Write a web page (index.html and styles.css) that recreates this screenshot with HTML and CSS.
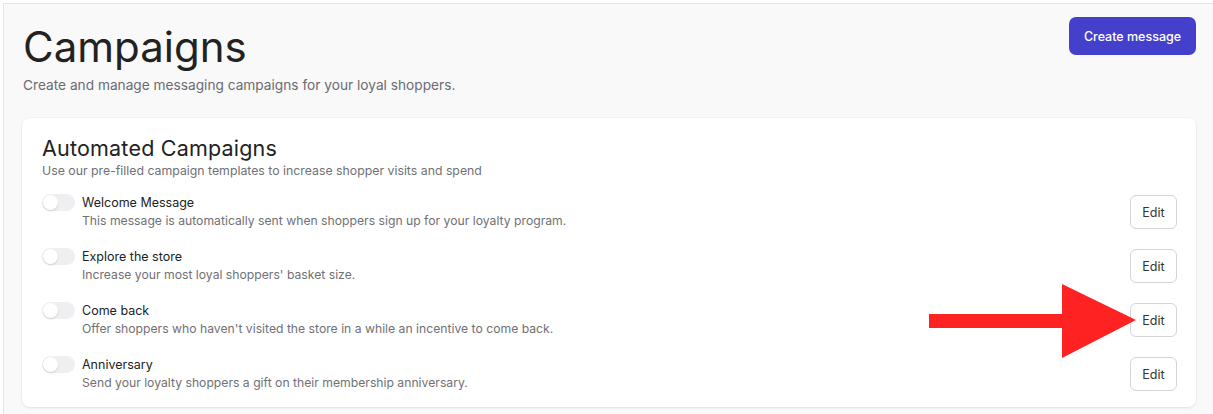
FILE: index.html
```html
<!DOCTYPE html>
<html>
<head>
<meta charset="utf-8">
<link rel="stylesheet" href="styles.css">
</head>
<body>
<div class="frame">
  <header class="page-head">
    <div class="head-text">
      <h1 class="page-title">Campaigns</h1>
      <p class="page-sub">Create and manage messaging campaigns for your loyal shoppers.</p>
    </div>
    <button class="btn-primary">Create message</button>
  </header>
  <section class="card">
    <h2 class="card-title">Automated Campaigns</h2>
    <p class="card-sub">Use our pre-filled campaign templates to increase shopper visits and spend</p>
    <ul class="rows">
      <li class="row">
        <span class="toggle"><span class="knob"></span></span>
        <div class="row-text">
          <div class="row-title">Welcome Message</div>
          <div class="row-desc">This message is automatically sent when shoppers sign up for your loyalty program.</div>
        </div>
        <button class="btn-edit">Edit</button>
      </li>
      <li class="row">
        <span class="toggle"><span class="knob"></span></span>
        <div class="row-text">
          <div class="row-title">Explore the store</div>
          <div class="row-desc">Increase your most loyal shoppers' basket size.</div>
        </div>
        <button class="btn-edit">Edit</button>
      </li>
      <li class="row">
        <span class="toggle"><span class="knob"></span></span>
        <div class="row-text">
          <div class="row-title">Come back</div>
          <div class="row-desc">Offer shoppers who haven't visited the store in a while an incentive to come back.</div>
        </div>
        <button class="btn-edit">Edit</button>
      </li>
      <li class="row">
        <span class="toggle"><span class="knob"></span></span>
        <div class="row-text">
          <div class="row-title">Anniversary</div>
          <div class="row-desc">Send your loyalty shoppers a gift on their membership anniversary.</div>
        </div>
        <button class="btn-edit">Edit</button>
      </li>
    </ul>
  </section>
</div>
<svg class="arrow" width="210" height="76" viewBox="0 0 210 76" aria-hidden="true">
  <polygon points="0,30 133,30 133,0 207,36 133,74 133,44 0,44" fill="#fe2222"/>
</svg>
</body>
</html>
```

FILE: styles.css
```css
* { box-sizing: border-box; }
html, body { margin: 0; padding: 0; background: #ffffff; }
body {
  font-family: Inter, "Noto Sans", "Liberation Sans", sans-serif;
  color: #222;
  height: 414px;
  overflow: hidden;
  position: relative;
}
.frame {
  margin: 3px 0 0 3px;
  border-top: 1px solid #e4e4e7;
  border-left: 1px solid #e4e4e7;
  background: #f9f9fa;
  padding: 13px 17px 0 18px;
  height: 420px;
}
.page-head {
  display: flex;
  justify-content: space-between;
  align-items: flex-start;
}
.head-text { padding-left: 1px; }
.page-title {
  margin: 0;
  font-size: 42px;
  font-weight: 400;
  line-height: 60px;
  letter-spacing: 0;
  color: #222;
}
.page-sub {
  margin: -2px 0 0;
  font-size: 13.7px;
  line-height: 20px;
  color: #6b6b70;
}
.btn-primary {
  font-family: inherit;
  margin-top: 0;
  width: 127px;
  height: 38px;
  border: 0;
  border-radius: 7px;
  background: #4540cb;
  color: #fff;
  font-size: 12.5px;
  font-weight: 500;
}
.card {
  margin-top: 23px;
  background: #fff;
  border-radius: 8px;
  box-shadow: 0 1px 3px rgba(0,0,0,0.08), 0 0 0 1px rgba(0,0,0,0.02);
  padding: 16px 19px 5px 20px;
}
.card-title {
  margin: 0;
  font-size: 21.5px;
  font-weight: 400;
  letter-spacing: 0.2px;
  line-height: 28px;
  color: #222;
}
.card-sub {
  margin: 0;
  font-size: 12.3px;
  line-height: 18px;
  color: #707075;
}
.rows { list-style: none; margin: 6px 0 0; padding: 0; }
.row {
  display: flex;
  align-items: center;
  height: 54px;
}
.toggle {
  align-self: flex-start;
  margin-top: 8px;
  width: 33px;
  height: 17px;
  border-radius: 9px;
  background: #efeff1;
  position: relative;
  flex: none;
}
.knob {
  position: absolute;
  left: 1px;
  top: 1px;
  width: 15px;
  height: 15px;
  border-radius: 50%;
  background: #fff;
  box-shadow: 0 1px 2px rgba(0,0,0,0.15);
}
.row-text { flex: 1; margin-left: 7px; align-self: flex-start; margin-top: 8px; }
.row-title { font-size: 12.5px; line-height: 18px; color: #222; }
.row-desc { font-size: 12.2px; line-height: 18px; color: #707075; }
.btn-edit {
  font-family: inherit;
  width: 47px;
  height: 34px;
  margin-bottom: 2px;
  border: 1px solid #d4d4d8;
  border-radius: 6px;
  background: #fff;
  color: #333;
  font-size: 12.5px;
}
.arrow {
  position: absolute;
  left: 929px;
  top: 284px;
}
```
